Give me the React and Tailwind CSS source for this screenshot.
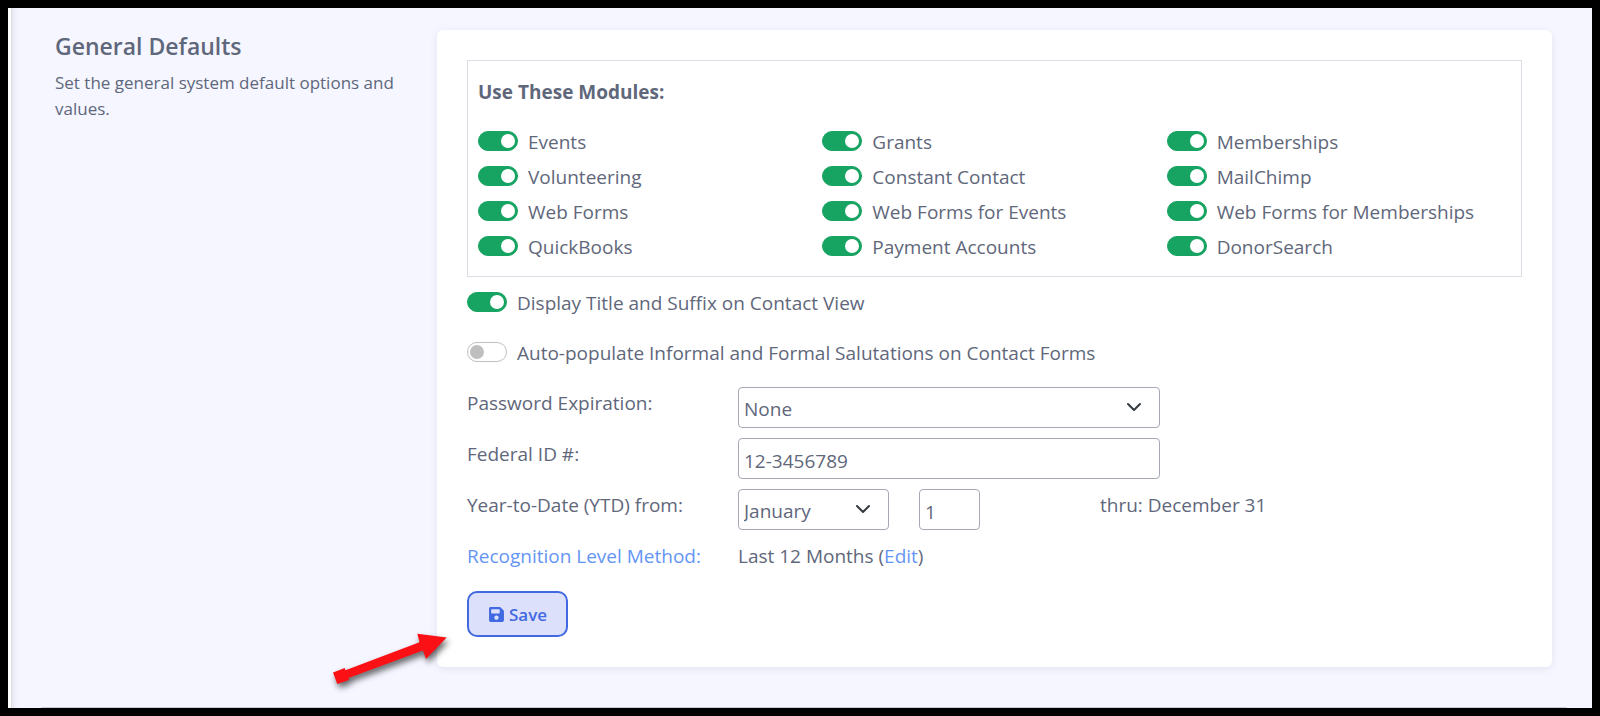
import { useState } from "react";
import { FaSave } from "react-icons/fa";

const modules = [
  "Events",
  "Grants",
  "Memberships",
  "Volunteering",
  "Constant Contact",
  "MailChimp",
  "Web Forms",
  "Web Forms for Events",
  "Web Forms for Memberships",
  "QuickBooks",
  "Payment Accounts",
  "DonorSearch",
];

const months = [
  "January",
  "February",
  "March",
  "April",
  "May",
  "June",
  "July",
  "August",
  "September",
  "October",
  "November",
  "December",
];

const fieldClass =
  "h-[41px] w-full appearance-none rounded border border-[#a6a9b6] bg-white px-[5px] pt-1 outline-none focus:border-[#4169e1]";

function Toggle({ label, defaultOn = true }) {
  const [on, setOn] = useState(defaultOn);

  return (
    <label className="flex cursor-pointer items-start gap-[10px]">
      <input
        type="checkbox"
        checked={on}
        onChange={(e) => setOn(e.target.checked)}
        className="mt-px h-5 w-10 shrink-0 cursor-pointer appearance-none rounded-full border border-[#bfbfbf] bg-white p-[2px] before:block before:size-[14px] before:rounded-full before:bg-[#bfbfbf] checked:border-[#17a462] checked:bg-[#17a462] checked:before:ml-5 checked:before:bg-white"
      />
      <span>{label}</span>
    </label>
  );
}

function Select({ id, options }) {
  return (
    <div className="relative">
      <select id={id} className={fieldClass}>
        {options.map((option) => (
          <option key={option}>{option}</option>
        ))}
      </select>
      <svg
        viewBox="0 0 16 16"
        className="pointer-events-none absolute top-3 right-[18px] size-4 text-[#343a40]"
        fill="none"
        stroke="currentColor"
        strokeWidth="2"
        strokeLinecap="round"
        strokeLinejoin="round"
      >
        <path d="m2 5 6 6 6-6" />
      </svg>
    </div>
  );
}

function Arrow() {
  return (
    <svg
      viewBox="0 0 130 64"
      className="pointer-events-none absolute -bottom-[27px] -left-[110px] h-16 w-[130px] drop-shadow-[2px_4px_3px_rgba(0,0,0,0.6)]"
      fill="#fb1016"
    >
      <path d="M6 42.5 17.7 38l.8 2.2L92.500 12.200 90.300 3.700 119.700 7.500 99 29 96 20.500 21.500 48l.5 2-11.700 4z" />
    </svg>
  );
}

export default function App() {
  return (
    <div className="flex min-h-screen flex-col border-8 border-black bg-white pl-[3px] font-['Open_Sans','Noto_Sans',sans-serif] text-[19px] leading-[25px] text-[#5f677b]">
      <div className="flex flex-1 flex-col border-l border-[#dcdde2] bg-[#f5f6ff] shadow-[inset_8px_0_8px_-8px_rgba(0,0,0,0.12)]">
        <div className="flex flex-1 items-start pt-[22px] pr-10 pb-10 pl-[43px]">
          <aside className="w-[382px] shrink-0 pr-10">
            <h2 className="mb-2 text-[23px] leading-8 font-semibold">
              General Defaults
            </h2>
            <p className="text-[17px] leading-[26px]">
              Set the general system default options and values.
            </p>
          </aside>

          <main className="relative min-w-0 flex-1 rounded-md bg-white p-[30px] shadow-[0_2px_8px_rgba(0,0,0,0.08)]">
            <fieldset className="border border-[#dadde3] px-[10px] pt-[19px] pb-4">
              <h3 className="font-bold">Use These Modules:</h3>
              <div className="mt-[25px] grid grid-cols-3 gap-y-[10px]">
                {modules.map((name) => (
                  <Toggle key={name} label={name} />
                ))}
              </div>
            </fieldset>

            <div className="mt-[14px] flex flex-col items-start gap-[25px]">
              <Toggle label="Display Title and Suffix on Contact View" />
              <Toggle
                label="Auto-populate Informal and Formal Salutations on Contact Forms"
                defaultOn={false}
              />
            </div>

            <form onSubmit={(e) => e.preventDefault()} className="mt-[21px]">
              <div className="grid grid-cols-[271px_422px_1fr] gap-y-[10px]">
                <label htmlFor="password-expiration" className="pt-1">
                  Password Expiration:
                </label>
                <Select
                  id="password-expiration"
                  options={["None", "30 Days", "60 Days", "90 Days"]}
                />

                <label htmlFor="federal-id" className="col-start-1 pt-1">
                  Federal ID #:
                </label>
                <input
                  id="federal-id"
                  type="text"
                  defaultValue="12-3456789"
                  className={fieldClass}
                />

                <label htmlFor="ytd-month" className="col-start-1 pt-1">
                  Year-to-Date (YTD) from:
                </label>
                <div className="col-span-2 flex">
                  <div className="w-[151px]">
                    <Select id="ytd-month" options={months} />
                  </div>
                  <div className="ml-[30px] w-[61px]">
                    <input
                      type="text"
                      aria-label="Day"
                      defaultValue="1"
                      className={fieldClass}
                    />
                  </div>
                  <span className="ml-[120px] pt-1">thru: December 31</span>
                </div>

                <a href="#recognition" className="pt-1 text-[#6495f5]">
                  Recognition Level Method:
                </a>
                <p className="pt-1">
                  Last 12 Months (
                  <a href="#edit" className="text-[#6495f5]">
                    Edit
                  </a>
                  )
                </p>
              </div>

              <button
                type="submit"
                className="mt-[22px] flex h-[46px] w-[101px] items-center justify-center gap-1 rounded-[10px] border-2 border-[#4169e1] bg-[#dde0fb] text-[17px] font-semibold text-[#4169e1]"
              >
                <FaSave />
                Save
              </button>
            </form>
            <Arrow />
          </main>
        </div>
        <div className="mr-[25px] ml-[29px] h-px bg-[#c9cbd6]" />
      </div>
    </div>
  );
}
